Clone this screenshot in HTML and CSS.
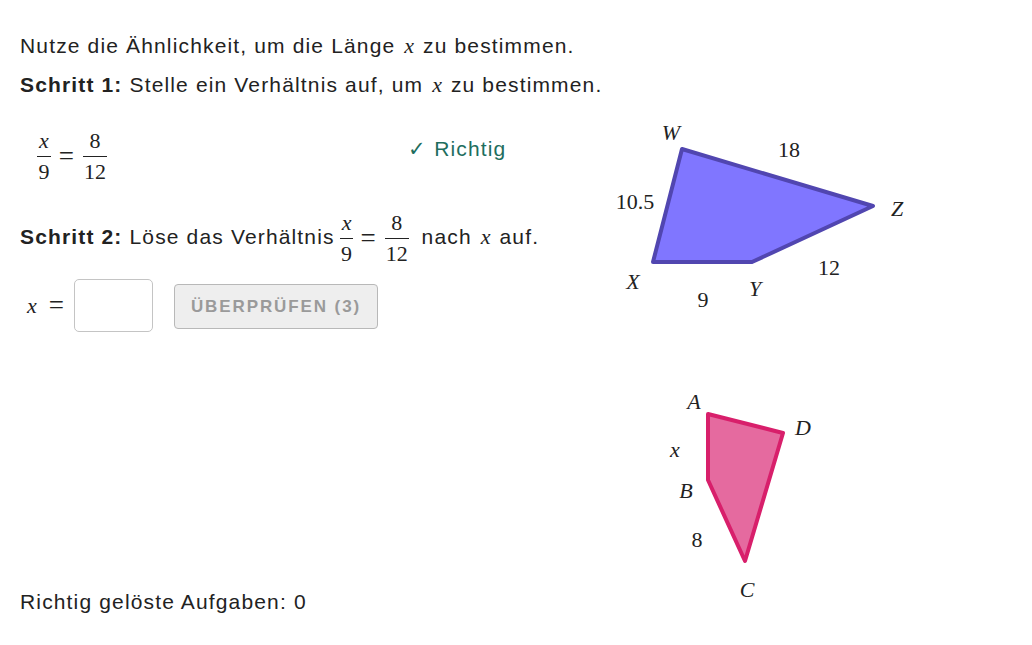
FILE: index.html
```html
<!DOCTYPE html>
<html lang="de">
<head>
<meta charset="utf-8">
<title>Ähnlichkeit</title>
<link rel="stylesheet" href="styles.css">
</head>
<body>
<div class="page">
  <div class="left">
    <p class="line first">Nutze die Ähnlichkeit, um die Länge <span class="mi">x</span> zu bestimmen.</p>
    <p class="line"><b>Schritt 1:</b> Stelle ein Verhältnis auf, um <span class="mi">x</span> zu bestimmen.</p>
    <div class="step1">
      <div class="eq">
        <span class="frac"><span class="num mi">x</span><span class="den">9</span></span><span class="mo">=</span><span class="frac"><span class="num">8</span><span class="den">12</span></span>
      </div>
      <div class="ok">✓ Richtig</div>
    </div>
    <p class="step2"><b>Schritt 2:</b> Löse das Verhältnis <span class="frac"><span class="num mi">x</span><span class="den">9</span></span><span class="mo">=</span><span class="frac last"><span class="num">8</span><span class="den">12</span></span> nach <span class="mi">x</span> auf.</p>
    <div class="answer">
      <span class="mi">x</span><span class="mo">=</span>
      <span class="box"></span>
      <button class="check">ÜBERPRÜFEN (3)</button>
    </div>
    <p class="score">Richtig gelöste Aufgaben: 0</p>
  </div>
  <svg class="figure" width="432" height="645" viewBox="600 0 432 645" xmlns="http://www.w3.org/2000/svg">
    <polygon points="682,149 873,206 752,262 653,262" fill="#8076ff" stroke="#5146b0" stroke-width="4" stroke-linejoin="round"/>
    <polygon points="708,414 783,433 745,561 708,480" fill="#e56a9f" stroke="#d81f6b" stroke-width="4" stroke-linejoin="round"/>
    <g class="lbl it">
      <text x="671" y="140">W</text>
      <text x="897" y="216">Z</text>
      <text x="633" y="289">X</text>
      <text x="755" y="296">Y</text>
      <text x="694" y="409">A</text>
      <text x="803" y="435">D</text>
      <text x="675" y="457">x</text>
      <text x="686" y="498">B</text>
      <text x="747" y="597">C</text>
    </g>
    <g class="lbl">
      <text x="789" y="157">18</text>
      <text x="635" y="209">10.5</text>
      <text x="703" y="307">9</text>
      <text x="829" y="275">12</text>
      <text x="697" y="547">8</text>
    </g>
  </svg>
</div>
</body>
</html>
```
FILE: styles.css
```css
html, body {
  margin: 0;
  padding: 0;
  background: #fff;
}
body {
  font-family: "Liberation Sans", Arial, sans-serif;
  color: #222;
  font-size: 21px;
  letter-spacing: 1.15px;
}
.page {
  display: flex;
  width: 1032px;
  height: 645px;
}
.left {
  flex: 1;
  min-width: 0;
  display: flex;
  flex-direction: column;
  padding: 26px 0 0 20px;
}
.line {
  margin: 0;
  line-height: 39px;
  height: 39px;
  white-space: nowrap;
}
b { font-weight: bold; }
.mi {
  font-family: "Liberation Serif", "Times New Roman", serif;
  font-style: italic;
  font-size: 22px;
  letter-spacing: 0;
  padding: 0 2px;
}
.mo {
  font-family: "Liberation Serif", serif;
  font-size: 27px;
  letter-spacing: 0;
  margin: 0 6px;
  vertical-align: middle;
}
.frac {
  display: inline-flex;
  flex-direction: column;
  align-items: center;
  vertical-align: middle;
  font-family: "Liberation Serif", serif;
  font-size: 22px;
  line-height: 26px;
  letter-spacing: 0;
}
.frac .num {
  border-bottom: 1.5px solid #222;
  padding: 0 2px 2px;
  align-self: stretch;
  text-align: center;
}
.frac .den { padding: 2px 1px 0; }
.step1 {
  display: flex;
  align-items: center;
  margin-top: 22px;
  height: 60px;
}
.eq {
  padding-left: 17px;
  width: 371px;
}
.eq .mo { margin: 0 9px 0 8px; }
.ok {
  color: #1e6e5e;
  font-size: 21px;
  margin-top: -14px;
}
.step2 {
  margin: 21px 0 0 0;
  height: 60px;
  line-height: 60px;
  white-space: nowrap;
}
.step2 .frac { margin-left: -2px; }
.step2 .mo { margin: 0 9px 0 7px; }
.step2 .frac.last { margin-left: 0; margin-right: 6px; }
.answer {
  display: flex;
  align-items: center;
  margin-top: 12px;
  padding-left: 5px;
}
.answer .mo { margin: 0 10px 0 10px; }
.box {
  width: 77px;
  height: 51px;
  border: 1px solid #c4c4c4;
  border-radius: 5px;
  margin-right: 21px;
}
.check {
  width: 204px;
  height: 45px;
  margin-top: 2px;
  background: #eeeeee;
  border: 1px solid #b8b8b8;
  border-radius: 4px;
  color: #9a9a9a;
  font-family: "Liberation Sans", Arial, sans-serif;
  font-weight: bold;
  font-size: 17px;
  letter-spacing: 1.9px;
}
.score {
  margin: auto 0 31px 0;
  white-space: nowrap;
}
.figure {
  flex: none;
  display: block;
}
.lbl text {
  font-family: "Liberation Serif", serif;
  font-size: 22px;
  fill: #222;
  text-anchor: middle;
  letter-spacing: 0;
}
.lbl.it text { font-style: italic; }
```
